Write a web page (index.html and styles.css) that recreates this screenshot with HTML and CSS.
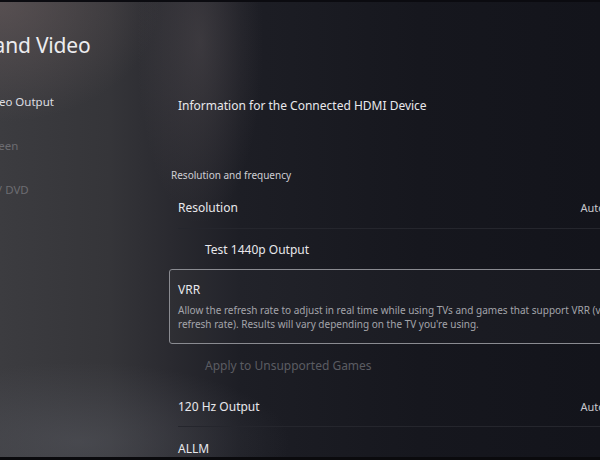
FILE: index.html
```html
<!DOCTYPE html>
<html lang="en">
<head>
<meta charset="utf-8">
<title>Screen and Video</title>
<link rel="stylesheet" href="styles.css">
</head>
<body>
<div class="screen">
  <aside class="side">
    <h1 class="title">Screen and Video</h1>
    <nav class="nav">
      <div class="nav-item active">Video Output</div>
      <div class="nav-item">Screen</div>
      <div class="nav-item">BD/ DVD</div>
    </nav>
  </aside>
  <main class="content">
    <div class="row info">Information for the Connected HDMI Device</div>
    <div class="section-label">Resolution and frequency</div>
    <div class="row sep tall"><span>Resolution</span><span class="value">Auto</span></div>
    <div class="row sub short">Test 1440p Output</div>
    <div class="focus">
      <div class="focus-title">VRR</div>
      <div class="focus-desc">Allow the refresh rate to adjust in real time while using TVs and games that support VRR (variable<br>refresh rate). Results will vary depending on the TV you're using.</div>
    </div>
    <div class="row sub dim tall">Apply to Unsupported Games</div>
    <div class="row sep"><span>120 Hz Output</span><span class="value">Auto</span></div>
    <div class="row tall">ALLM</div>
  </main>
</div>
</body>
</html>
```
FILE: styles.css
```css
html, body {
  margin: 0;
  padding: 0;
  width: 600px;
  height: 460px;
  overflow: hidden;
  background: #15161d;
}

.screen {
  width: 600px;
  height: 460px;
  overflow: hidden;
  display: flex;
  font-family: "Noto Sans", "Open Sans", sans-serif;
  color: #e6e6ea;
  box-sizing: border-box;
  border-top: 2px solid #0b0b10;
  border-bottom: 3px solid #0a0a0d;
  background:
    radial-gradient(ellipse 90px 260px at 200px 40px, rgba(120,110,112,0.28), rgba(120,110,112,0) 70%),
    radial-gradient(ellipse 160px 120px at 0px 0px, rgba(110,96,96,0.55), rgba(110,96,96,0) 100%),
    radial-gradient(ellipse 210px 80px at 80px 440px, rgba(92,94,102,0.45), rgba(92,94,102,0) 100%),
    linear-gradient(90deg, #3c3c40 0px, #353539 110px, #2a2a30 170px, #1d1e25 240px, #16171e 420px, #13141b 600px);
}

.side {
  flex: none;
  width: 230px;
  margin-left: -70px;
  box-sizing: border-box;
  overflow: visible;
}

.title {
  margin: 29px 0 0 -7px;
  font-weight: 400;
  font-size: 21px;
  line-height: 28px;
  color: #ececef;
  white-space: nowrap;
  letter-spacing: -0.2px;
}

.nav {
  margin-top: 34px;
  display: flex;
  flex-direction: column;
  padding-left: 52px;
}

.nav-item {
  height: 44px;
  line-height: 18px;
  font-size: 11.5px;
  color: #6c6c71;
  white-space: nowrap;
}

.nav-item.active {
  color: #dedee2;
}

.content {
  flex: 1;
  margin-left: 9px;
  padding-top: 82px;
  min-width: 0;
  display: flex;
  flex-direction: column;
}

.row {
  height: 41px;
  flex: none;
  box-sizing: border-box;
  margin-left: 9px;
  display: flex;
  align-items: center;
  justify-content: space-between;
  font-size: 12px;
  white-space: nowrap;
  color: #e8e8ec;
}

.row.tall {
  height: 42px;
}

.row.short {
  height: 40px;
}

.row.sep {
  border-bottom: 1px solid #25262d;
}

.row.info {
  height: 42px;
  margin-bottom: 42px;
}

.row.sub {
  padding-left: 27px;
}

.row.dim {
  color: #5b5c62;
}

.value {
  margin-right: -5px;
  font-size: 11px;
  color: #c8c8cc;
}

.section-label {
  font-size: 10px;
  color: #cfcfd4;
  line-height: 14px;
  margin-left: 2px;
  margin-bottom: 5px;
}

.focus {
  height: 75px;
  flex: none;
  box-sizing: border-box;
  margin-right: -20px;
  border: 1px solid #8a8b91;
  border-radius: 3px;
  background: rgba(255,255,255,0.025);
  padding: 10px 8px 0 8px;
}

.focus-title {
  font-size: 12px;
  line-height: 20px;
  color: #e8e8ec;
}

.focus-desc {
  margin-top: 3px;
  font-size: 10px;
  line-height: 14px;
  color: #a3a4aa;
  white-space: nowrap;
}
```
